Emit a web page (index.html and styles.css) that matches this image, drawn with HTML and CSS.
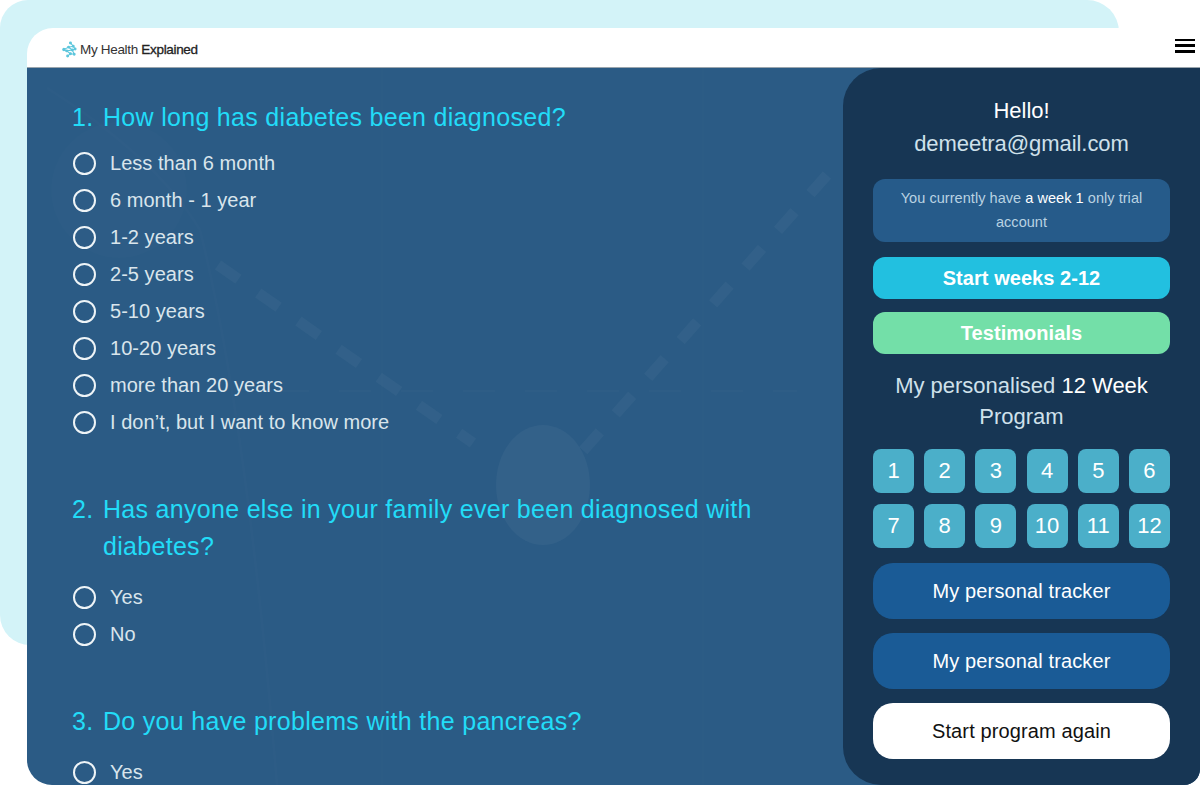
FILE: index.html
```html
<!DOCTYPE html>
<html lang="en">
<head>
<meta charset="utf-8">
<title>My Health Explained</title>
<link rel="stylesheet" href="styles.css">
</head>
<body>
<div class="page">
  <div class="backdrop"></div>
  <div class="window">
    <header class="topbar">
      <div class="logo">
        <svg class="logo-mark" viewBox="0 0 16 17" width="15" height="17" aria-hidden="true">
          <g stroke="#5cc6dc" stroke-width="1.1" fill="#5cc6dc">
            <path d="M9 1.5L12 5L7 6L11 9L5 10L9 13L6 15.5M12 5L14 8L11 9L13 13.5L9 13M7 6L2 8.5L5 10" fill="none"/>
            <circle cx="9" cy="1.5" r="1"/><circle cx="12" cy="5" r="1"/><circle cx="7" cy="6" r="1"/><circle cx="11" cy="9" r="1"/>
            <circle cx="5" cy="10" r="1"/><circle cx="2" cy="8.5" r="1.2"/><circle cx="14" cy="8" r="1"/><circle cx="9" cy="13" r="1"/><circle cx="13" cy="13.5" r="1"/><circle cx="6" cy="15.5" r="1"/>
          </g>
        </svg>
        <span class="logo-text">My Health <b>Explained</b></span>
      </div>
      <button class="menu" aria-label="Menu"><span></span><span></span><span></span></button>
    </header>
    <div class="main">
      <section class="quiz">
        <svg class="art" viewBox="0 0 816 717" aria-hidden="true">
          <g fill="none" stroke="#fff" stroke-width="1.5">
            <path d="M355 0V717M676 0V717" stroke-opacity=".012"/>
            <path d="M250 323H770" stroke-opacity=".025" stroke-dasharray="32 30"/>
            <path d="M173 162Q220 350 250 717" stroke-opacity=".012" stroke-width="3"/>
            <path d="M20 20Q130 90 173 162" stroke-opacity=".012" stroke-width="3"/>
          </g>
          <circle cx="92" cy="122" r="68" fill="#fff" fill-opacity=".012"/>
          <ellipse cx="516" cy="417" rx="47" ry="60" fill="#fff" fill-opacity=".04"/>
          <path d="M191 197L446 375M800 107L548 392" fill="none" stroke="#fff" stroke-opacity=".035" stroke-width="11" stroke-dasharray="25 24"/>
        </svg>
        <div class="question">
          <h2 class="q-title q-title-tight"><span class="q-num">1.</span><span>How long has diabetes been diagnosed?</span></h2>
          <label class="option"><i class="radio"></i>Less than 6 month</label>
          <label class="option"><i class="radio"></i>6 month - 1 year</label>
          <label class="option"><i class="radio"></i>1-2 years</label>
          <label class="option"><i class="radio"></i>2-5 years</label>
          <label class="option"><i class="radio"></i>5-10 years</label>
          <label class="option"><i class="radio"></i>10-20 years</label>
          <label class="option"><i class="radio"></i>more than 20 years</label>
          <label class="option"><i class="radio"></i>I don’t, but I want to know more</label>
        </div>
        <div class="question">
          <h2 class="q-title"><span class="q-num">2.</span><span>Has anyone else in your family ever been diagnosed with diabetes?</span></h2>
          <label class="option"><i class="radio"></i>Yes</label>
          <label class="option"><i class="radio"></i>No</label>
        </div>
        <div class="question">
          <h2 class="q-title"><span class="q-num">3.</span><span>Do you have problems with the pancreas?</span></h2>
          <label class="option"><i class="radio"></i>Yes</label>
        </div>
      </section>
      <aside class="side">
        <p class="hello">Hello!</p>
        <p class="email">demeetra@gmail.com</p>
        <p class="notice">You currently have <b>a week 1</b> only trial account</p>
        <a class="cta cta-blue">Start weeks 2-12</a>
        <a class="cta cta-green">Testimonials</a>
        <p class="program">My personalised <b>12 Week</b> Program</p>
        <div class="weeks">
          <a>1</a><a>2</a><a>3</a><a>4</a><a>5</a><a>6</a>
          <a>7</a><a>8</a><a>9</a><a>10</a><a>11</a><a>12</a>
        </div>
        <a class="pill">My personal tracker</a>
        <a class="pill">My personal tracker</a>
        <a class="pill pill-white">Start program again</a>
      </aside>
    </div>
  </div>
</div>
</body>
</html>
```
FILE: styles.css
```css
* { box-sizing: border-box; }
html, body { margin: 0; padding: 0; }
body { font-family: "Liberation Sans", Arial, sans-serif; background: #fff; }
p, h2 { margin: 0; font-weight: 400; }
.page { position: relative; width: 1200px; height: 785px; overflow: hidden; background: #fff; }
.backdrop { position: absolute; left: 0; top: 0; width: 1119px; height: 645px; background: #d3f3f8; border-radius: 28px 32px 0 30px; }
.window { position: relative; top: 28px; display: flex; flex-direction: column; height: 757px; margin-left: 27px; border-radius: 26px 0 16px 25px; overflow: hidden; }
.topbar { display: flex; align-items: center; justify-content: space-between; height: 40px; padding: 4px 5px 0 35px; background: #fff; border-bottom: 1px solid #9aa5ad; }
.logo { display: flex; align-items: center; gap: 3px; }
.logo-mark { display: block; }
.logo-text { font-size: 13.5px; letter-spacing: -.32px; color: #333; }
.logo-text b { font-weight: 400; color: #222; -webkit-text-stroke: .3px #222; }
.menu { display: flex; flex-direction: column; justify-content: space-between; width: 20px; height: 14px; padding: 0; border: 0; background: none; position: relative; top: -4px; }
.menu span { display: block; height: 2.5px; background: #000; }
.main { display: flex; flex: 1; min-height: 0; background: #2b5b85; }
.quiz { position: relative; flex: 1; min-width: 0; padding: 31px 0 0 45px; overflow: hidden; }
.art { position: absolute; left: 0; top: 0; width: 816px; height: 717px; }
.question { position: relative; margin-bottom: 50px; }
.q-title { display: flex; font-size: 25px; line-height: 37px; letter-spacing: .3px; color: #22dcf8; margin-bottom: 14px; width: 700px; }
.q-title-tight { margin-bottom: 9px; }
.q-num { width: 31px; flex: none; }
.option { display: flex; align-items: center; height: 37px; font-size: 20px; letter-spacing: .04px; color: #d9e5ec; }
.radio { width: 23px; height: 23px; flex: none; margin: 0 14px 0 1px; border: 2.5px solid #eef4f7; border-radius: 50%; }
.side { flex: none; width: 357px; margin-left: -1px; padding: 26px 30px 0; border-radius: 38px 0 0 38px; background: #173654; color: #e9f3f8; display: flex; flex-direction: column; align-items: stretch; text-align: center; }
.hello { font-size: 22px; line-height: 33px; color: #fff; }
.email { font-size: 22px; line-height: 33px; letter-spacing: -.05px; color: #cfe1eb; margin-bottom: 19px; }
.notice { height: 63px; padding: 7px 20px 0; background: #265b8a; border-radius: 12px; font-size: 14.5px; line-height: 24px; letter-spacing: .05px; color: #b9d2e2; margin-bottom: 15px; }
.notice b { font-weight: 400; color: #fff; }
.cta { display: flex; align-items: center; justify-content: center; height: 42px; border-radius: 12px; font-size: 20px; font-weight: 700; letter-spacing: .05px; color: #fff; }
.cta-blue { background: #22c0e0; margin-bottom: 13px; }
.cta-green { background: #73dfa8; margin-bottom: 16px; }
.program { font-size: 22px; line-height: 31px; color: #cfe1eb; margin-bottom: 17px; }
.program b { font-weight: 400; color: #fff; }
.weeks { display: grid; grid-template-columns: repeat(6, 41px); justify-content: space-between; row-gap: 11px; margin-bottom: 15px; }
.weeks a { display: flex; align-items: center; justify-content: center; height: 44px; background: #4bafc9; border-radius: 8px; font-size: 22px; color: #fff; }
.pill { display: flex; align-items: center; justify-content: center; height: 56px; margin-bottom: 14px; border-radius: 20px; background: #1a5b96; font-size: 20px; letter-spacing: .12px; color: #fff; }
.pill-white { background: #fff; color: #111; }
```
